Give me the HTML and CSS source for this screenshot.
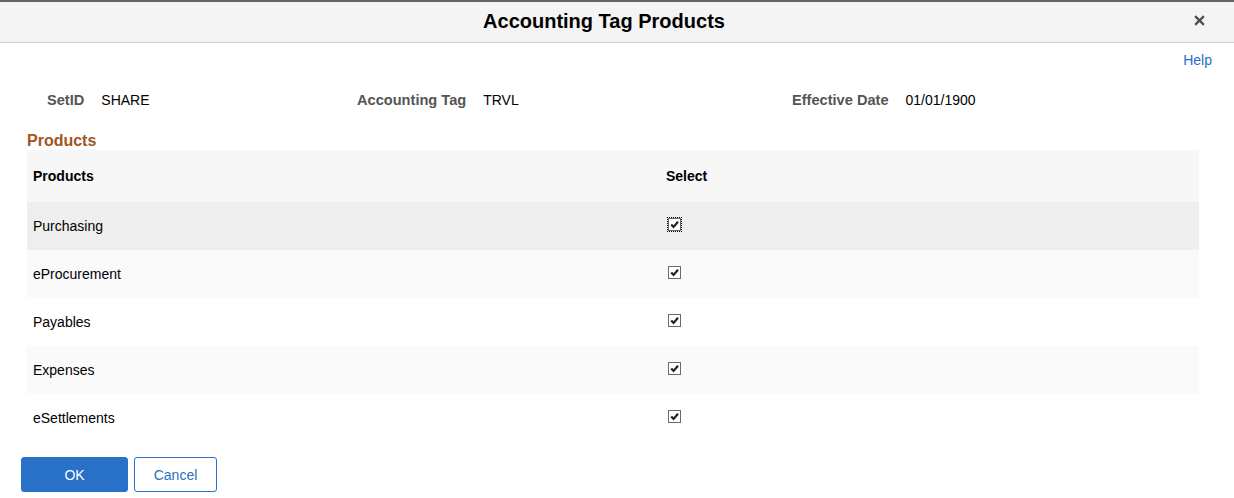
FILE: index.html
```html
<!DOCTYPE html>
<html lang="en">
<head>
  <meta charset="UTF-8" />
  <title>Accounting Tag Products</title>
  <link rel="stylesheet" href="styles.css">
</head>
<body>

<div class="dialog">
  <header class="dialog-header">
    <h1>Accounting Tag Products</h1>
    <button class="close-button" title="Close">
      <svg viewBox="0 0 10 10"><path d="M1 1 L9 9 M9 1 L1 9" /></svg>
    </button>
  </header>

  <div class="help-row">
    <a href="#" class="help-link">Help</a>
  </div>

  <div class="fields">
    <div class="field"><span class="label">SetID</span><span class="value">SHARE</span></div>
    <div class="field"><span class="label">Accounting Tag</span><span class="value">TRVL</span></div>
    <div class="field"><span class="label">Effective Date</span><span class="value">01/01/1900</span></div>
  </div>

  <h2 class="section-title">Products</h2>

  <table class="grid">
    <thead>
      <tr>
        <th class="col-product">Products</th>
        <th>Select</th>
      </tr>
    </thead>
    <tbody>
      <tr class="active">
        <td>Purchasing</td>
        <td><span class="check focused"><svg viewBox="0 0 11 11"><path d="M2.2 5.4 L4.6 7.9 L9 2.8" /></svg></span></td>
      </tr>
      <tr>
        <td>eProcurement</td>
        <td><span class="check"><svg viewBox="0 0 11 11"><path d="M2.2 5.4 L4.6 7.9 L9 2.8" /></svg></span></td>
      </tr>
      <tr>
        <td>Payables</td>
        <td><span class="check"><svg viewBox="0 0 11 11"><path d="M2.2 5.4 L4.6 7.9 L9 2.8" /></svg></span></td>
      </tr>
      <tr>
        <td>Expenses</td>
        <td><span class="check"><svg viewBox="0 0 11 11"><path d="M2.2 5.4 L4.6 7.9 L9 2.8" /></svg></span></td>
      </tr>
      <tr>
        <td>eSettlements</td>
        <td><span class="check"><svg viewBox="0 0 11 11"><path d="M2.2 5.4 L4.6 7.9 L9 2.8" /></svg></span></td>
      </tr>
    </tbody>
  </table>

  <div class="buttons">
    <button class="btn btn-primary">OK</button>
    <button class="btn btn-secondary">Cancel</button>
  </div>
</div>

</body>
</html>
```

FILE: styles.css
```css
body {
  margin: 0;
  font-family: "Liberation Sans", Arial, sans-serif;
  font-size: 14px;
  color: #000;
  background: white;
}

.dialog-header {
  position: relative;
  height: 40px;
  background: #f4f4f4;
  border-top: 2px solid #646464;
  border-bottom: 1px solid #d2d2da;
}

.dialog-header h1 {
  margin: 0;
  padding-right: 26px;
  text-align: center;
  font-size: 20px;
  line-height: 38px;
  font-weight: bold;
}

.close-button {
  position: absolute;
  top: 13px;
  right: 29px;
  width: 11px;
  height: 11px;
  padding: 0;
  border: none;
  background: none;
  cursor: pointer;
}

.close-button svg {
  display: block;
  width: 11px;
  height: 11px;
}

.close-button path {
  stroke: #4d4d4d;
  stroke-width: 2;
  fill: none;
}

.help-row {
  text-align: right;
  padding: 9px 22px 0 0;
  height: 22px;
}

.help-link {
  color: #2b6fc6;
  text-decoration: none;
  font-size: 14px;
  line-height: 17px;
}

.fields {
  display: grid;
  grid-template-columns: 310px 435px 1fr;
  padding: 0 0 0 47px;
  margin-top: 18px;
  line-height: 17px;
}

.field .label {
  color: #555;
  font-weight: bold;
  font-size: 14.6px;
  margin-right: 17px;
}

.section-title {
  margin: 23px 0 0 27px;
  font-size: 16px;
  line-height: 18px;
  color: #a0561d;
  font-weight: bold;
}

.grid {
  margin: 0 0 0 27px;
  width: 1172px;
  border-collapse: collapse;
  table-layout: fixed;
}

.grid th,
.grid td {
  text-align: left;
  padding: 0 0 0 6px;
  font-size: 14px;
}

.grid th {
  height: 52px;
  background: #f7f7f7;
  font-weight: bold;
}

.grid .col-product {
  width: 627px;
}

.grid td {
  height: 48px;
}

.grid tbody tr:nth-child(odd) {
  background: white;
}

.grid tbody tr:nth-child(even) {
  background: #fafafa;
}

.grid tbody tr.active {
  background: #eeeeee;
}

.check {
  display: inline-block;
  width: 11px;
  height: 11px;
  border: 1px solid #6a6a6a;
  background: white;
  margin-left: 2px;
  vertical-align: 0;
}

.check.focused {
  outline: 1px dotted #000;
  outline-offset: 0;
}

.check svg {
  display: block;
  width: 11px;
  height: 11px;
}

.check path {
  fill: none;
  stroke: #222;
  stroke-width: 2.2;
}

.buttons {
  display: flex;
  gap: 6px;
  padding: 15px 0 0 21px;
}

.btn {
  height: 35px;
  font-family: "Liberation Sans", Arial, sans-serif;
  font-size: 14px;
  border-radius: 3px;
  cursor: pointer;
}

.btn-primary {
  width: 107px;
  background: #2870c8;
  color: white;
  border: 1px solid #2870c8;
}

.btn-secondary {
  width: 83px;
  background: white;
  color: #2870c8;
  border: 1px solid #2870c8;
}
```
